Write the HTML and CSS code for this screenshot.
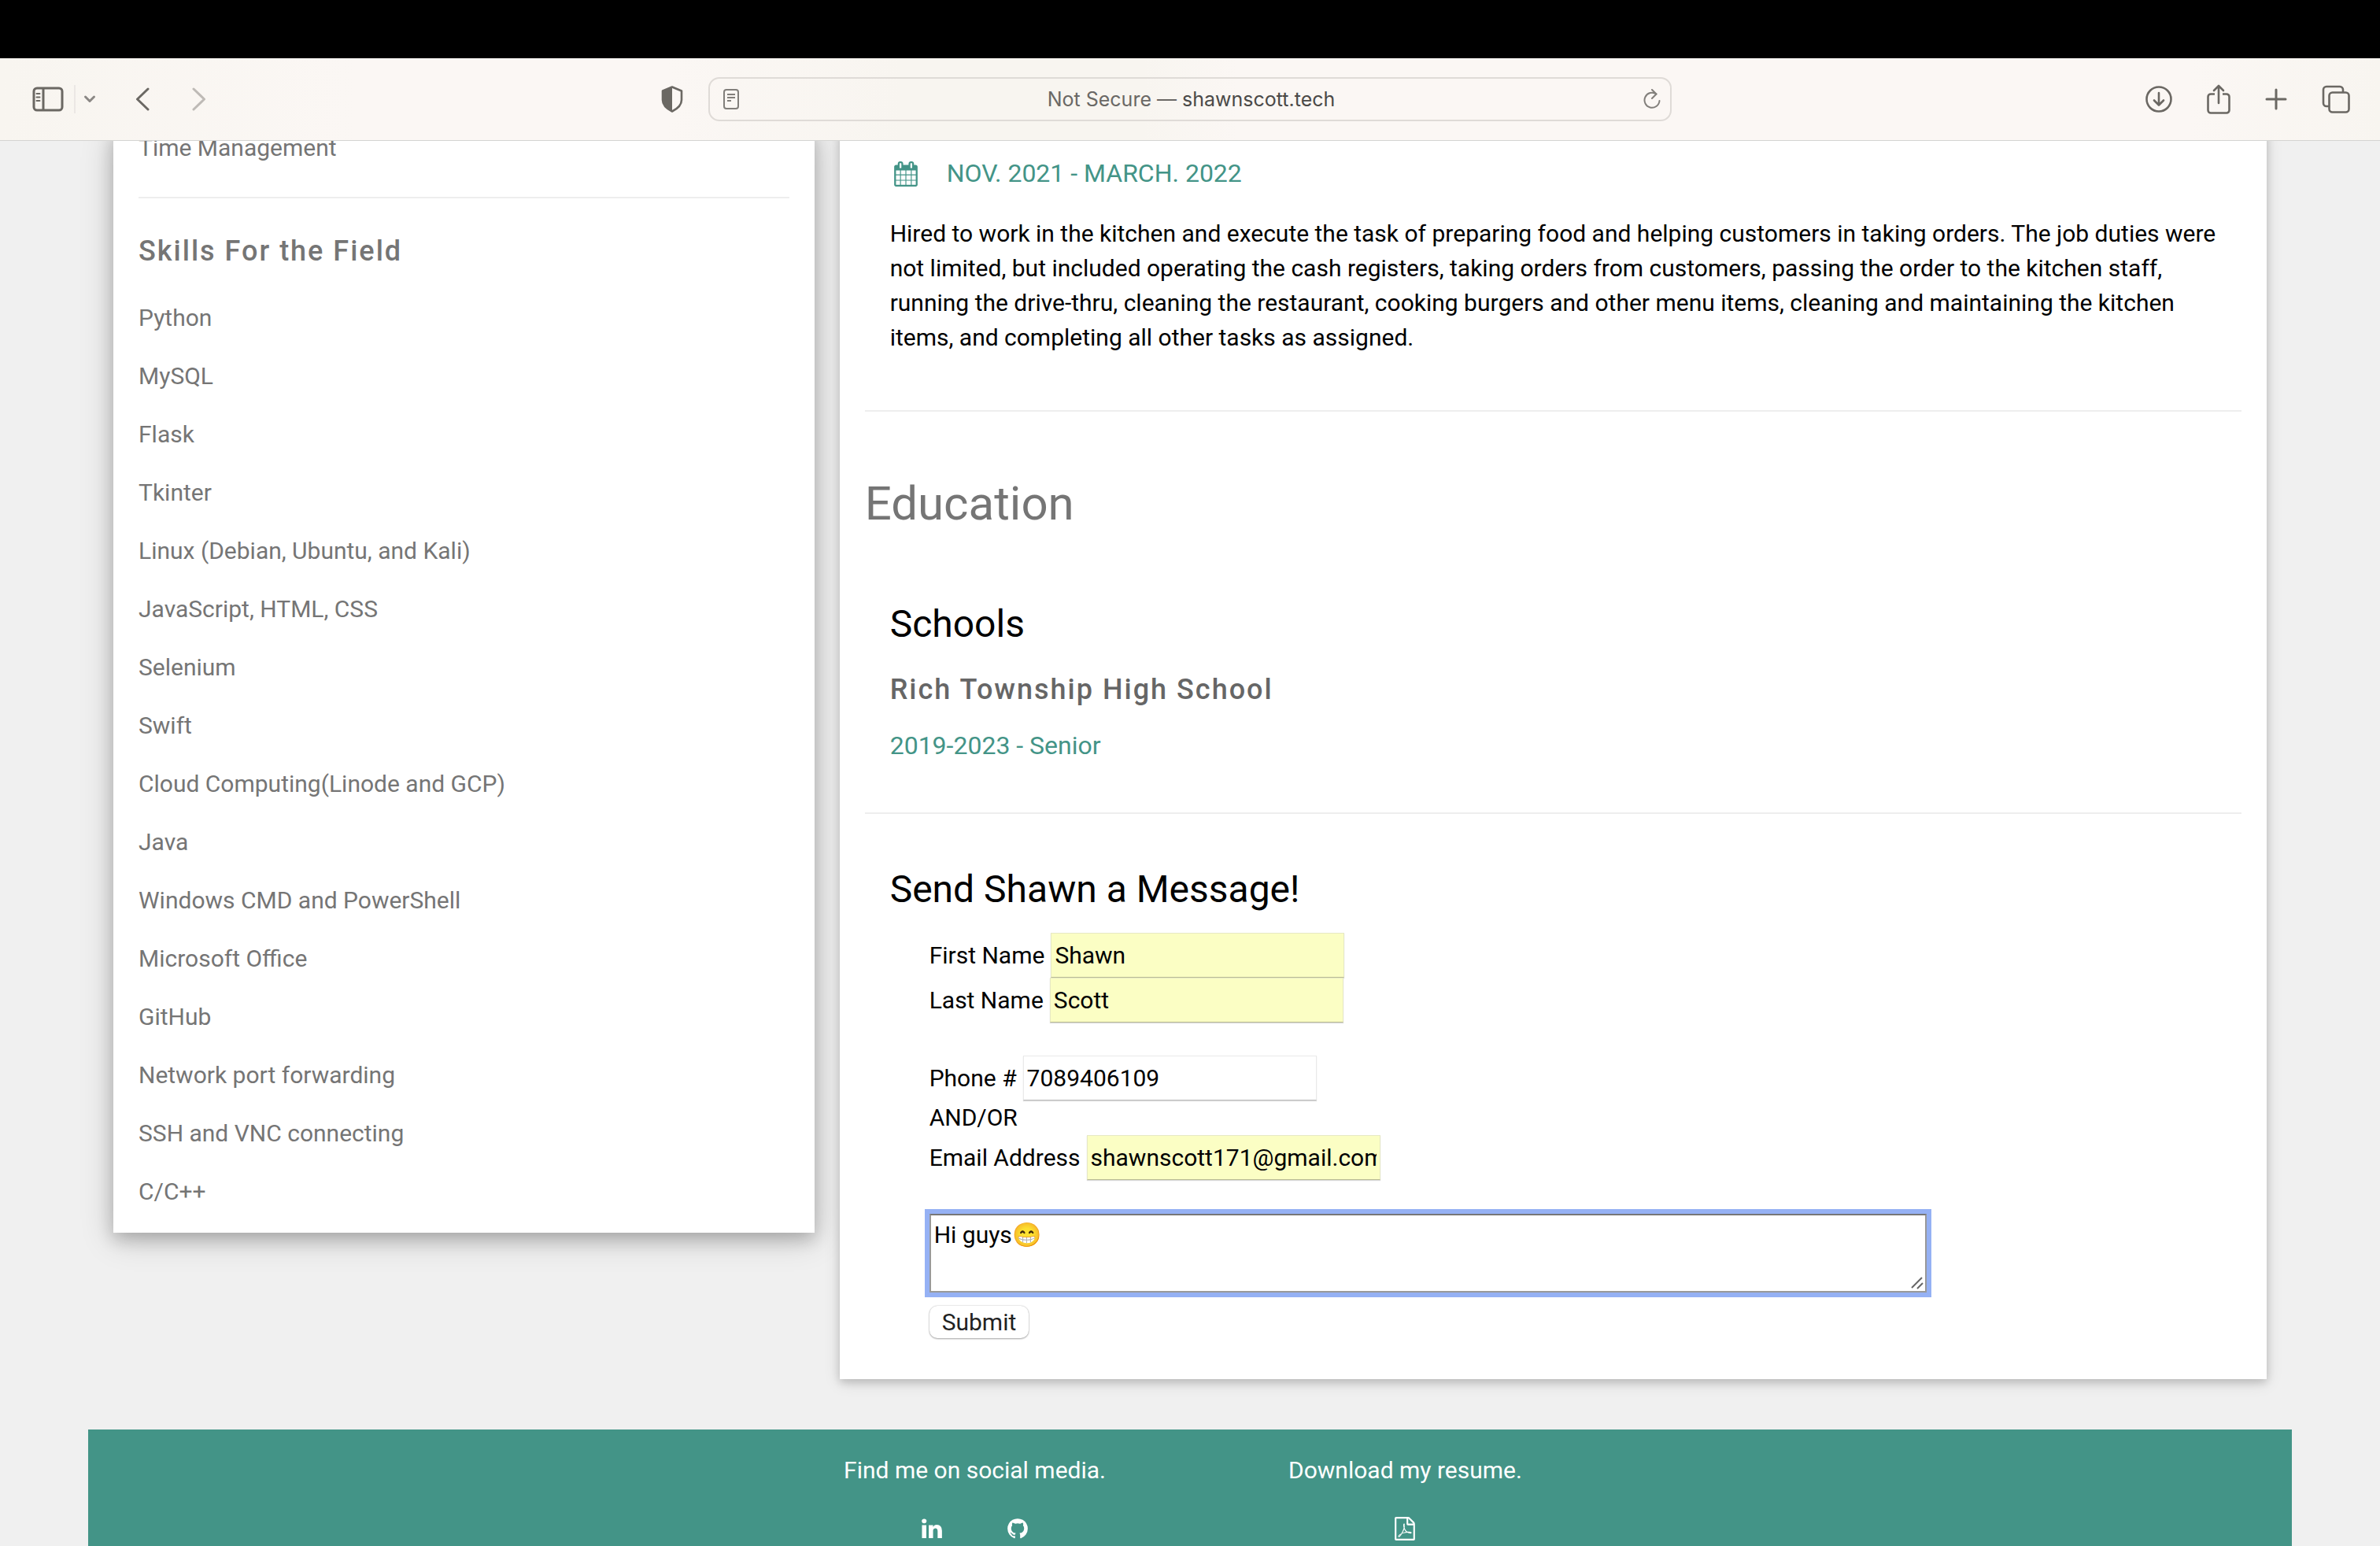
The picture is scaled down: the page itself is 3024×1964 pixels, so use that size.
FILE: index.html
```html
<!DOCTYPE html>
<html lang="en">
<head>
<meta charset="utf-8">
<title>Shawn Scott</title>
<link rel="stylesheet" href="styles.css">
</head>
<body>
<div class="screen">
  <header class="toolbar">
    <div class="tools tools-left">
      <button class="tool" aria-label="Sidebar"><svg width="40" height="32" viewBox="0 0 40 32" fill="none" stroke="currentColor" stroke-width="3"><rect x="2" y="2" width="36" height="28" rx="4"/><path d="M14 2v28"/><path d="M5.500 9h4M5.500 13.500h4M5.500 18h4" stroke-width="2" stroke-linecap="round"/></svg></button>
      <span class="divider"></span>
      <button class="tool tool-menu" aria-label="Sidebar menu"><svg width="16" height="12" viewBox="0 0 16 12" fill="none" stroke="currentColor" stroke-width="3" stroke-linecap="round" stroke-linejoin="round"><path d="M2.500 3L8 8.500L13.500 3"/></svg></button>
      <button class="tool tool-back" aria-label="Back"><svg width="18" height="30" viewBox="0 0 18 30" fill="none" stroke="currentColor" stroke-width="3" stroke-linecap="round" stroke-linejoin="round"><path d="M16 2L2.500 15L16 28"/></svg></button>
      <button class="tool tool-forward" aria-label="Forward"><svg width="18" height="30" viewBox="0 0 18 30" fill="none" stroke="currentColor" stroke-width="3" stroke-linecap="round" stroke-linejoin="round"><path d="M2 2L15.500 15L2 28"/></svg></button>
      <button class="tool tool-shield" aria-label="Privacy report"><svg width="28" height="34" viewBox="0 0 28 34"><path d="M14 1.500L26 6.500V18C26 25 20 29.500 14 32.500C8 29.500 2 25 2 18V6.500Z" fill="none" stroke="currentColor" stroke-width="2.600" stroke-linejoin="round"/><path d="M14 1.500L2 6.500V18C2 25 8 29.500 14 32.500Z" fill="currentColor"/></svg></button>
    </div>
    <div class="address">
      <button class="tool" aria-label="Reader"><svg width="20" height="26" viewBox="0 0 20 26" fill="none" stroke="currentColor" stroke-width="2"><rect x="1" y="1" width="18" height="24" rx="3"/><path d="M5 7h10M5 11h10M5 15h5"/></svg></button>
      <span class="address-text">Not Secure — <b>shawnscott.tech</b></span>
      <button class="tool" aria-label="Reload"><svg width="22" height="26" viewBox="0 0 22 26" fill="none" stroke="currentColor" stroke-width="2" stroke-linecap="round" stroke-linejoin="round"><path d="M16.500 6.500A9.500 9.500 0 1 0 20.500 15"/><path d="M11 1L16.500 6.500L11 12"/></svg></button>
    </div>
    <div class="tools tools-right">
      <button class="tool" aria-label="Downloads"><svg width="34" height="34" viewBox="0 0 34 34" fill="none" stroke="currentColor" stroke-width="2.600" stroke-linecap="round" stroke-linejoin="round"><circle cx="17" cy="17" r="15.500"/><path d="M17 9v15M11 18.500L17 24.500L23 18.500"/></svg></button>
      <button class="tool" aria-label="Share"><svg width="30" height="38" viewBox="0 0 30 38" fill="none" stroke="currentColor" stroke-width="2.600" stroke-linecap="round" stroke-linejoin="round"><path d="M10 12.500H5a3.500 3.500 0 0 0-3.500 3.500V33A3.500 3.500 0 0 0 5 36.500H25A3.500 3.500 0 0 0 28.500 33V16A3.500 3.500 0 0 0 25 12.500H20" stroke-linecap="butt"/><path d="M15 24V2M9 8L15 2L21 8"/></svg></button>
      <button class="tool" aria-label="New tab"><svg width="28" height="28" viewBox="0 0 28 28" fill="none" stroke="currentColor" stroke-width="3" stroke-linecap="round"><path d="M14 2v24M2 14h24"/></svg></button>
      <button class="tool" aria-label="Tab overview"><svg width="36" height="36" viewBox="0 0 36 36" fill="none" stroke="currentColor" stroke-width="2.600"><rect x="9.500" y="9.500" width="25" height="25" rx="4"/><path d="M27 9.500V6A4 4 0 0 0 23 2H6A4 4 0 0 0 2 6V23A4 4 0 0 0 6 27H9.500"/></svg></button>
    </div>
  </header>

  <div class="page">
    <div class="columns">
      <aside class="column column-side">
        <div class="card card-side">
          <p>Time Management</p>
          <hr>
          <p class="side-title">Skills For the Field</p>
          <p>Python</p>
          <p>MySQL</p>
          <p>Flask</p>
          <p>Tkinter</p>
          <p>Linux (Debian, Ubuntu, and Kali)</p>
          <p>JavaScript, HTML, CSS</p>
          <p>Selenium</p>
          <p>Swift</p>
          <p>Cloud Computing(Linode and GCP)</p>
          <p>Java</p>
          <p>Windows CMD and PowerShell</p>
          <p>Microsoft Office</p>
          <p>GitHub</p>
          <p>Network port forwarding</p>
          <p>SSH and VNC connecting</p>
          <p>C/C++</p>
        </div>
      </aside>

      <main class="column column-main">
        <div class="card card-main">
          <section class="block block-job">
            <h6 class="date"><svg class="date-icon" width="32" height="32" viewBox="0 0 1792 1792" fill="currentColor"><path d="M192 1664h288v-288h-288v288zm352 0h320v-288h-320v288zm-352-352h288v-320h-288v320zm352 0h320v-320h-320v320zm-352-384h288v-288h-288v288zm736 736h320v-288h-320v288zm-384-736h320v-288h-320v288zm768 736h288v-288h-288v288zm-384-352h320v-320h-320v320zm-352-864v-288q0-13-9.500-22.500t-22.500-9.500h-64q-13 0-22.500 9.500t-9.500 22.500v288q0 13 9.500 22.500t22.500 9.500h64q13 0 22.500-9.500t9.500-22.500zm736 864h288v-320h-288v320zm-384-384h320v-288h-320v288zm384 0h288v-288h-288v288zm32-480v-288q0-13-9.500-22.500t-22.500-9.500h-64q-13 0-22.500 9.500t-9.500 22.500v288q0 13 9.500 22.500t22.500 9.500h64q13 0 22.500-9.500t9.500-22.500zm384-64v1280q0 52-38 90t-90 38h-1408q-52 0-90-38t-38-90v-1280q0-52 38-90t90-38h128v-96q0-66 47-113t113-47h64q66 0 113 47t47 113v96h384v-96q0-66 47-113t113-47h64q66 0 113 47t47 113v96h128q52 0 90 38t38 90z"/></svg>NOV. 2021 - MARCH. 2022</h6>
            <p>Hired to work in the kitchen and execute the task of preparing food and helping customers in taking orders. The job duties were not limited, but included operating the cash registers, taking orders from customers, passing the order to the kitchen staff, running the drive-thru, cleaning the restaurant, cooking burgers and other menu items, cleaning and maintaining the kitchen items, and completing all other tasks as assigned.</p>
          </section>
          <hr>
          <h2>Education</h2>
          <section class="block block-school">
            <h3>Schools</h3>
            <h5>Rich Township High School</h5>
            <h6 class="date">2019-2023 - Senior</h6>
          </section>
          <hr>
          <section class="block block-message">
            <h3>Send Shawn a Message!</h3>
            <form class="message">
              <div class="field"><label for="first">First Name</label><input class="filled" id="first" type="text" value="Shawn"></div>
              <div class="field field-last"><label for="last">Last Name</label><input class="filled" id="last" type="text" value="Scott"></div>
              <div class="field"><label for="phone">Phone #</label><input id="phone" type="tel" value="7089406109"></div>
              <div class="either">AND/OR</div>
              <div class="field"><label for="email">Email Address</label><input class="filled" id="email" type="text" value="shawnscott171@gmail.com"></div>
              <div class="note">
                <textarea aria-label="Message" spellcheck="false">Hi guys😁</textarea>
                <svg class="grip" width="16" height="16" viewBox="0 0 16 16" fill="none" stroke="#666" stroke-width="2"><path d="M1 14L14 1M8 15L15 8"/></svg>
              </div>
              <button class="submit" type="button">Submit</button>
            </form>
          </section>
        </div>
      </main>
    </div>

    <footer class="footer">
      <div class="footer-group">
        <p>Find me on social media.</p>
        <div class="footer-icons">
          <a href="#linkedin" aria-label="LinkedIn"><svg width="30" height="30" viewBox="0 0 1792 1792" fill="currentColor"><path d="M477 625v991h-330v-991h330zm21-306q1 73-50.500 122t-135.500 49h-2q-82 0-132-49t-50-122q0-74 51.500-122.500t134.500-48.500 133 48.500 51 122.500zm1166 729v568h-329v-530q0-105-40.500-164.500t-126.500-59.500q-63 0-105.500 34.500t-63.500 85.500q-11 30-11 81v553h-329q2-399 2-647t-1-296l-1-48h329v144h-2q20-32 41-56t56.500-52 87-43.500 114.500-15.500q171 0 275 113.500t104 332.500z"/></svg></a>
          <a href="#github" aria-label="GitHub"><svg width="30" height="30" viewBox="0 0 1792 1792" fill="currentColor"><path d="M896 128q209 0 385.500 103t279.500 279.500 103 385.500q0 251-146.500 451.500t-378.500 277.500q-27 5-40-7t-13-30q0-3 .5-76.500t.5-134.500q0-97-52-142 57-6 102.500-18t94-39 81-66.500 53-105 20.500-150.500q0-119-79-206 37-91-8-204-28-9-81 11t-92 44l-38 24q-93-26-192-26t-192 26q-16-11-42.500-27t-83.500-38.500-85-13.500q-45 113-8 204-79 87-79 206 0 85 20.500 150t52.500 105 80.500 67 94 39 102.500 18q-39 36-49 103-21 10-45 15t-57 5-65.500-21.500-55.500-62.500q-19-32-48.500-52t-49.500-24l-20-3q-21 0-29 4.500t-5 11.500 9 14 13 12l7 5q22 10 43.500 38t31.500 51l10 23q13 38 44 61.500t67 30 69.500 7 55.500-3.500l23-4q0 38 .5 88.500t.5 54.500q0 18-13 30t-40 7q-232-77-378.500-277.500t-146.500-451.500q0-209 103-385.500t279.500-279.500 385.500-103z"/></svg></a>
        </div>
      </div>
      <div class="footer-group">
        <p>Download my resume.</p>
        <div class="footer-icons">
          <a href="#resume" aria-label="Resume PDF"><svg width="30" height="30" viewBox="0 0 1792 1792" fill="currentColor"><path d="M1596 380q28 28 48 76t20 88v1152q0 40-28 68t-68 28h-1344q-40 0-68-28t-28-68v-1600q0-40 28-68t68-28h896q40 0 88 20t76 48zm-444-244v376h376q-10-29-22-41l-313-313q-12-12-41-22zm384 1528v-1024h-416q-40 0-68-28t-28-68v-416h-768v1536h1280zm-514-593q33 26 84 56 59-7 117-7 147 0 177 49 16 22 2 52 0 1-1 2l-2 2v1q-6 38-71 38-48 0-115-20t-130-53q-221 24-392 83-153 262-242 262-15 0-28-7l-24-12q-1-1-6-5-10-10-6-36 9-40 56-91.500t132-96.500q14-9 23 6 2 2 2 4 52-85 107-197 68-136 104-262-24-82-30.500-159.500t6.500-127.500q11-40 42-40h22q23 0 35 15 18 21 9 68-2 6-4 8 1 3 1 8v30q-2 123-14 192 55 164 146 238zm-576 411q52-24 137-158-51 40-87.500 84t-49.500 74zm398-920q-15 42-2 132 1-7 7-44 0-3 7-43 1-4 4-8-1-1-1-2t-1-2q-1-22-13-36 0 1-1 2v2zm-124 661q135-54 284-81-2-1-13-9.500t-16-13.500q-76-67-127-176-27 86-83 197-30 56-45 83zm646-16q-24-24-140-24 76 28 124 28 14 0 18-1 0-1-2-3z"/></svg></a>
        </div>
      </div>
    </footer>
  </div>
</div>
</body>
</html>
```
FILE: styles.css
```css
* {
  box-sizing: border-box;
}

body {
  margin: 0;
  background: #f0f0f0;
  color: #000;
  font-family: Roboto, "Liberation Sans", sans-serif;
  font-size: 30px;
  line-height: 44px;
}

.screen {
  height: 100vh;
  overflow: hidden;
}

button {
  border: 0;
  background: none;
  font: inherit;
}

/* Browser toolbar */
.toolbar {
  position: relative;
  z-index: 1;
  display: grid;
  grid-template-columns: 1fr minmax(0, 1224px) 1fr;
  align-items: center;
  height: 179px;
  padding-top: 74px;
  border-bottom: 1px solid #d4d4d2;
  background: linear-gradient(#000 74px, transparent 74px),
    linear-gradient(90deg, #f8f5f0, #fbf7f4 15%, #fbf7f4 28%, #f8f5f0 38%, #f8f5f0 48%, #fbf7f4 52%, #fbf7f4 92%, #f8f5f0);
  color: #6b6863;
}

.tool {
  display: flex;
  padding: 0;
  color: inherit;
}

.tools {
  display: flex;
  align-items: center;
}

.tools-left {
  padding: 0 32px 0 41px;
}

.divider {
  width: 2px;
  height: 36px;
  margin: 0 10px 0 13px;
  background: #ebe7e4;
}

.tool-menu {
  color: #8b8885;
}

.tool-back {
  margin-left: 50px;
}

.tool-forward {
  margin-left: 54px;
  color: #bebab6;
}

.tool-shield {
  margin-left: auto;
}

.address {
  display: flex;
  align-items: center;
  justify-content: space-between;
  height: 56px;
  padding: 0 12px 0 17px;
  border: 2px solid #dfdbd7;
  border-radius: 14px;
  color: #827f7b;
}

.address-text {
  color: #6a6865;
  font-family: Inter, "Liberation Sans", sans-serif;
  font-size: 25px;
}

.address-text b {
  color: #4b4a48;
  font-weight: 400;
}

.tools-right {
  justify-content: flex-end;
  gap: 44px;
  padding-right: 38px;
}

/* Page, scrolled part way under the toolbar */
.page {
  max-width: 2800px;
  margin: -13px auto 0;
}

.columns {
  display: flex;
  align-items: flex-start;
  padding: 0 16px;
}

.column {
  padding: 0 16px;
}

.column-side {
  width: 33.333%;
}

.column-main {
  width: 66.667%;
}

.card {
  display: flow-root;
  padding: 0 32px;
  background: #fff;
}

.card-side {
  box-shadow: 0 8px 20px rgba(0, 0, 0, 0.2), 0 8px 40px rgba(0, 0, 0, 0.19);
  color: #757575;
}

.card-side p:first-child {
  margin-top: 0;
}

.card-main {
  box-shadow: 0 4px 10px rgba(0, 0, 0, 0.16), 0 4px 20px rgba(0, 0, 0, 0.12);
}

p {
  margin: 30px 0;
}

hr {
  margin: 40px 0;
  border: 0;
  border-top: 2px solid #eee;
}

.side-title {
  margin: 36px 0;
  font-size: 36px;
  font-weight: 500;
  line-height: 54px;
  letter-spacing: 2px;
}

h2,
h3,
h5,
h6 {
  margin: 20px 0;
  font-weight: 400;
}

h2 {
  padding: 32px 0;
  color: #757575;
  font-size: 60px;
  line-height: 90px;
}

h3 {
  font-size: 48px;
  line-height: 72px;
}

h5 {
  color: #666;
  font-size: 36px;
  font-weight: 500;
  line-height: 54px;
  letter-spacing: 2px;
}

.date {
  display: flex;
  align-items: center;
  gap: 36px;
  color: #439487;
  font-size: 32px;
  line-height: 49px;
}

.date-icon {
  margin-left: 4px;
}

.block {
  display: flow-root;
  padding: 0 32px;
}

.block-job {
  padding-top: 10px;
}

.block-message h3 {
  margin-bottom: 19px;
}

/* Message form */
.message {
  padding: 0 0 52px 50px;
}

.field {
  display: flex;
  align-items: center;
  gap: 8px;
}

.field-last {
  margin-bottom: 42px;
}

input {
  width: 373px;
  height: 57px;
  padding: 0 4px;
  border: 1px solid #e9e9e9;
  border-bottom-color: #bcbcbc;
  background: #fff;
  box-shadow: 0 1px 1px rgba(0, 0, 0, 0.15);
  color: #000;
  font: inherit;
}

input.filled {
  border-color: #e6e8c4;
  border-bottom-color: #b9bb93;
  background: #fbfec4;
}

.note {
  position: relative;
  width: 77.5%;
  margin: 43px 0 17px;
}

textarea {
  display: block;
  width: 100%;
  height: 100px;
  padding: 7px 4px;
  border: 2px solid #999;
  border-top-color: #777;
  border-radius: 0;
  outline: 0;
  box-shadow: 0 0 0 6px #95b1f4;
  background: #fff;
  color: #000;
  font: inherit;
  line-height: 36px;
  resize: none;
  overflow: hidden;
}

.grip {
  position: absolute;
  right: 4px;
  bottom: 4px;
}

.submit {
  display: block;
  height: 41px;
  padding: 0 16px;
  border-radius: 10px;
  background: #fff;
  box-shadow: 0 0 2px rgba(0, 0, 0, 0.25), 0 1px 2px rgba(0, 0, 0, 0.3);
  color: #222;
  line-height: 41px;
}

/* Footer */
.footer {
  display: flex;
  justify-content: center;
  gap: 232px;
  margin-top: 64px;
  padding: 0 18px 32px 0;
  background: #439487;
  color: #fff;
}

.footer-group p {
  margin: 30px 0;
}

.footer-icons {
  display: flex;
  justify-content: center;
  gap: 79px;
  height: 44px;
  align-items: center;
}

.footer-icons a {
  display: flex;
  color: inherit;
}
```
